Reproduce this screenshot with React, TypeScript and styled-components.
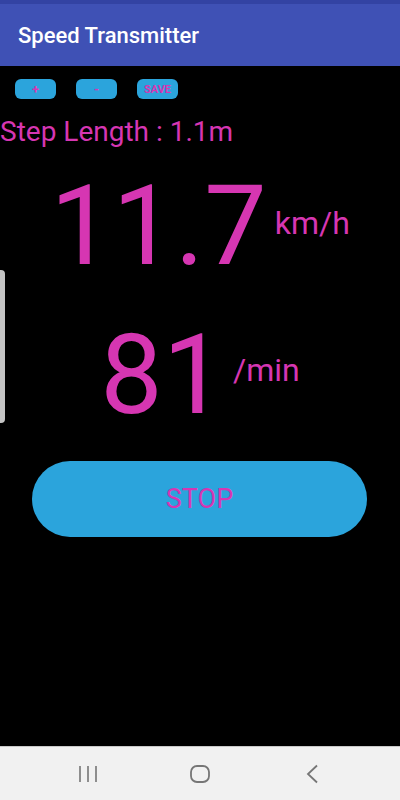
import styled, { createGlobalStyle } from "styled-components";

const MAGENTA = "#d636b2";
const SKY = "#2ba4dc";

const GlobalStyle = createGlobalStyle`
  html, body {
    margin: 0;
    padding: 0;
    background: #000;
  }
  * {
    box-sizing: border-box;
  }
`;

const Screen = styled.div`
  position: relative;
  width: 400px;
  height: 800px;
  display: flex;
  flex-direction: column;
  background: #000;
  font-family: Roboto, "Noto Sans", sans-serif;
  overflow: hidden;
`;

const StatusStrip = styled.div`
  height: 4px;
  background: #3343a3;
`;

const AppBar = styled.header`
  height: 62px;
  display: flex;
  align-items: center;
  padding-left: 18px;
  background: #3f51b5;
  color: #fff;
  font-size: 22px;
  font-weight: 500;
`;

const Body = styled.main`
  flex: 1;
  display: flex;
  flex-direction: column;
`;

const ButtonRow = styled.div`
  display: flex;
  gap: 20px;
  margin: 13px 0 0 15px;
`;

const SmallButton = styled.button<{ $size: number }>`
  width: 41px;
  height: 20px;
  border: none;
  border-radius: 6px;
  background: ${SKY};
  color: ${MAGENTA};
  font-family: Roboto, sans-serif;
  font-size: ${({ $size }) => $size}px;
  font-weight: 700;
  padding: 0;
  display: flex;
  align-items: center;
  justify-content: center;
`;

const StepLength = styled.div`
  margin-top: 17px;
  font-size: 28px;
  color: ${MAGENTA};
  line-height: 31px;
`;

const Reading = styled.div<{ $top: number }>`
  display: flex;
  justify-content: center;
  align-items: flex-start;
  gap: 8px;
  margin-top: ${({ $top }) => $top}px;
  color: ${MAGENTA};
`;

const Value = styled.span`
  font-size: 111px;
  line-height: 111px;
`;

const Unit = styled.span<{ $drop: number }>`
  font-size: 32px;
  line-height: 32px;
  margin-top: ${({ $drop }) => $drop}px;
`;

const StopButton = styled.button`
  margin: 30px 33px 0 32px;
  height: 76px;
  border: none;
  border-radius: 38px;
  background: ${SKY};
  color: ${MAGENTA};
  font-family: Roboto, sans-serif;
  font-size: 27px;
`;

const NavBar = styled.nav`
  height: 54px;
  background: #f1f1f1;
  border-top: 1px solid #c9c9c9;
  display: flex;
  align-items: center;
  justify-content: center;
  gap: 88px;
  color: #767676;
`;

const NavIcon = styled.svg`
  width: 24px;
  height: 24px;
`;

const EdgeHandle = styled.div`
  position: absolute;
  left: 0;
  top: 270px;
  width: 5px;
  height: 153px;
  background: #c4c4c4;
  border-radius: 0 4px 4px 0;
`;

export default function App() {
  return (
    <Screen>
      <GlobalStyle />
      <StatusStrip />
      <AppBar>Speed Transmitter</AppBar>
      <Body>
        <ButtonRow>
          <SmallButton $size={13}>+</SmallButton>
          <SmallButton $size={13}>-</SmallButton>
          <SmallButton $size={11}>SAVE</SmallButton>
        </ButtonRow>
        <StepLength>Step Length : 1.1m</StepLength>
        <Reading $top={24}>
          <Value>11.7</Value>
          <Unit $drop={36}>km/h</Unit>
        </Reading>
        <Reading $top={38}>
          <Value>81</Value>
          <Unit $drop={34}>/min</Unit>
        </Reading>
        <StopButton>STOP</StopButton>
      </Body>
      <NavBar>
        <NavIcon viewBox="0 0 24 24" fill="none" stroke="currentColor" strokeWidth="1.6">
          <path d="M4 4v16M12 4v16M20 4v16" />
        </NavIcon>
        <NavIcon viewBox="0 0 24 24" fill="none" stroke="currentColor" strokeWidth="1.8">
          <rect x="3" y="4" width="18" height="16" rx="6" />
        </NavIcon>
        <NavIcon viewBox="0 0 24 24" fill="none" stroke="currentColor" strokeWidth="1.8">
          <path d="M17 3.5L8 12l9 8.5" />
        </NavIcon>
      </NavBar>
      <EdgeHandle />
    </Screen>
  );
}
